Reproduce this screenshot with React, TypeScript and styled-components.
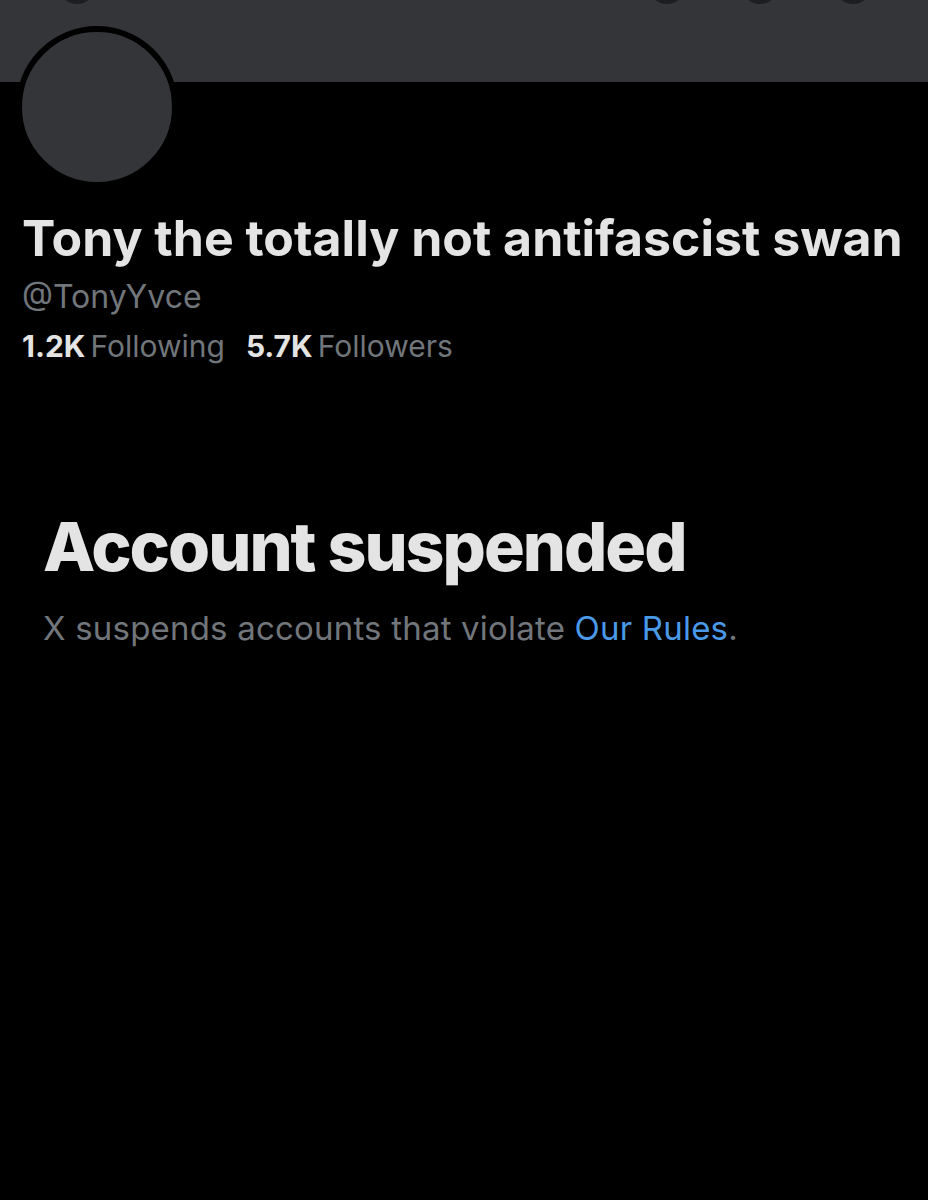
import React from "react";
import styled, { createGlobalStyle } from "styled-components";

const Global = createGlobalStyle`
  html, body { margin: 0; padding: 0; background: #000; }
  body { font-family: Inter, "Noto Sans", sans-serif; -webkit-font-smoothing: antialiased; }
`;

const Page = styled.div`
  width: 928px;
  height: 1200px;
  background: #000;
  overflow: hidden;
`;

const Banner = styled.div`
  height: 82px;
  background: #333539;
  overflow: hidden;
  display: flex;
  justify-content: space-between;
  padding: 0 57px 0 59px;
`;

const NavGroup = styled.div`
  display: flex;
  gap: 57px;
`;

const NavButton = styled.div`
  width: 36px;
  height: 36px;
  border-radius: 50%;
  background: #1d1e21;
  margin-top: -32px;
`;

const Profile = styled.div`
  padding: 0 22px;
  display: flex;
  flex-direction: column;
`;

const Avatar = styled.div`
  width: 150px;
  height: 150px;
  border-radius: 50%;
  background: #333539;
  border: 6px solid #000;
  margin: -56px 0 0 -6px;
`;

const Name = styled.h1`
  margin: 22px 0 0;
  font-size: 50px;
  font-weight: 700;
  color: #e4e4e4;
  letter-spacing: 0;
  line-height: 56px;
  white-space: nowrap;
`;

const Handle = styled.div`
  font-size: 32px;
  color: #71767b;
  line-height: 40px;
  margin-top: 11px;
`;

const Stats = styled.div`
  display: flex;
  gap: 21px;
  font-size: 30px;
  line-height: 40px;
  margin-top: 9px;
`;

const Stat = styled.span`
  color: #71767b;
  b {
    color: #e4e4e4;
    font-weight: 700;
    margin-right: 5px;
  }
`;

const Notice = styled.div`
  padding: 140px 43px 0;
`;

const Title = styled.h2`
  margin: 0;
  font-size: 68px;
  font-weight: 800;
  color: #e4e4e4;
  letter-spacing: -2px;
  line-height: 80px;
`;

const Message = styled.p`
  margin: 22px 0 0;
  font-size: 33px;
  color: #71767b;
  letter-spacing: 0.2px;
  line-height: 40px;
`;

const Link = styled.a`
  color: #4a99e9;
  text-decoration: none;
`;

export default function App() {
  return (
    <Page>
      <Global />
      <Banner>
        <NavButton />
        <NavGroup>
          <NavButton />
          <NavButton />
          <NavButton />
        </NavGroup>
      </Banner>
      <Profile>
        <Avatar />
        <Name>Tony the totally not antifascist swan</Name>
        <Handle>@TonyYvce</Handle>
        <Stats>
          <Stat><b>1.2K</b>Following</Stat>
          <Stat><b>5.7K</b>Followers</Stat>
        </Stats>
      </Profile>
      <Notice>
        <Title>Account suspended</Title>
        <Message>
          X suspends accounts that violate <Link href="#">Our Rules</Link>.
        </Message>
      </Notice>
    </Page>
  );
}
